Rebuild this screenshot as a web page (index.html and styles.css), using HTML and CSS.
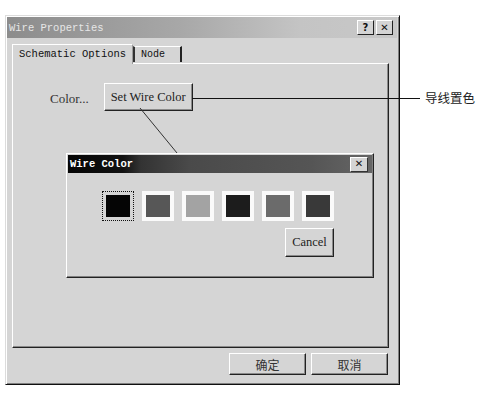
FILE: index.html
```html
<!DOCTYPE html>
<html lang="en">
<head>
  <meta charset="UTF-8">
  <title>Wire Properties</title>
  <link rel="stylesheet" href="styles.css">
</head>
<body>
  <div class="page">
    <div class="window">
      <div class="titlebar">
        <span class="title">Wire Properties</span>
        <span class="title-btn">?</span>
        <span class="title-btn">&#x2715;</span>
      </div>

      <div class="content">
        <div class="tabs">
          <div class="tab active">Schematic Options</div>
          <div class="tab">Node</div>
        </div>

        <div class="panel">
          <div class="color-row">
            <span class="label">Color...</span>
            <button class="btn set-color">Set Wire Color</button>
          </div>

          <div class="dialog">
            <div class="dialog-title">
              <span class="title">Wire Color</span>
              <span class="title-btn">&#x2715;</span>
            </div>
            <div class="dialog-body">
              <div class="swatches">
                <span class="swatch focus" style="background:#050505"></span>
                <span class="swatch" style="background:#575757"></span>
                <span class="swatch" style="background:#a3a3a3"></span>
                <span class="swatch" style="background:#1c1c1c"></span>
                <span class="swatch" style="background:#6b6b6b"></span>
                <span class="swatch" style="background:#393939"></span>
              </div>
              <button class="btn cancel">Cancel</button>
            </div>
          </div>
        </div>

        <div class="footer">
          <button class="btn cjk">确定</button>
          <button class="btn cjk">取消</button>
        </div>
      </div>
    </div>

    <!-- callout lines -->
    <svg class="leaders" width="481" height="397">
      <line x1="192" y1="98.5" x2="420" y2="98.5" stroke="#111" stroke-width="1.2"/>
      <line x1="140" y1="108" x2="177" y2="153" stroke="#333" stroke-width="1"/>
    </svg>
    <span class="callout">导线置色</span>
  </div>
</body>
</html>
```

FILE: styles.css
```css
body {
  margin: 0;
  background: #fff;
  font-family: "Liberation Serif", serif;
  color: #222;
}

.page {
  position: relative;
  width: 481px;
  height: 397px;
  padding: 15px 0 0 5px;
  box-sizing: border-box;
}

.window {
  width: 395px;
  height: 370px;
  box-sizing: border-box;
  background: #d5d5d5;
  border: 1px solid;
  border-color: #dcdcdc #101010 #101010 #dcdcdc;
  box-shadow: inset 1px 1px 0 #fff, inset -1px -1px 0 #808080;
  padding: 1px 2px 2px 1px;
  display: flex;
  flex-direction: column;
}

.titlebar {
  height: 21px;
  display: flex;
  align-items: center;
  gap: 2px;
  padding: 0 4px 0 2px;
  background: linear-gradient(to right, #8c8c8c, #a8a8a8 45%, #c4c4c4 75%, #c8c8c8);
}

.title {
  flex: 1;
  font-family: "Liberation Mono", monospace;
  font-size: 10.5px;
  color: #e6e6e6;
}

.title-btn {
  width: 15px;
  height: 13px;
  background: #d4d4d4;
  border: 1px solid;
  border-color: #fff #222 #222 #fff;
  font-family: "DejaVu Sans", sans-serif;
  font-size: 10px;
  font-weight: bold;
  color: #111;
  display: flex;
  align-items: center;
  justify-content: center;
  line-height: 1;
}

.content {
  flex: 1;
  display: flex;
  flex-direction: column;
  padding: 6px 8px 0 5px;
}

.tabs {
  display: flex;
  align-items: flex-end;
  height: 19px;
}

.tab {
  height: 16px;
  box-sizing: border-box;
  padding: 2px 6px 0 6px;
  border: 1px solid;
  border-bottom: none;
  border-color: #fff #222 transparent #fff;
  font-family: "Liberation Mono", monospace;
  font-size: 10px;
  color: #111;
  margin-bottom: 1px;
}

.tab.active {
  height: 20px;
  width: 121px;
  padding: 3px 0 0 6px;
  font-size: 10.5px;
  margin-bottom: -1px;
  background: #d5d5d5;
  position: relative;
  z-index: 1;
  border-right-color: #9a9a9a;
}

.tab:not(.active) {
  width: 49px;
  border-left-width: 2px;
  border-left-color: #333;
  border-right-width: 2px;
}

.panel {
  height: 285px;
  box-sizing: border-box;
  border: 1px solid;
  border-color: #fff #222 #222 #fff;
  box-shadow: inset -1px -1px 0 #8a8a8a;
  padding-top: 19px;
}

.color-row {
  display: flex;
  align-items: center;
  margin-left: 37px;
  gap: 15px;
}

.label {
  font-size: 13px;
  color: #333;
  margin-top: 4px;
}

.btn {
  font-family: "Liberation Serif", serif;
  background: #d5d5d5;
  border: 1px solid;
  border-color: #fff #222 #222 #fff;
  box-shadow: inset -1px -1px 0 #8a8a8a;
  color: #222;
  padding: 0;
  cursor: pointer;
}

.set-color {
  width: 89px;
  height: 28px;
  font-size: 12.5px;
}

.dialog {
  width: 308px;
  height: 125px;
  box-sizing: border-box;
  margin: 42px 0 0 53px;
  background: #d5d5d5;
  border: 1px solid;
  border-color: #fff #222 #222 #fff;
  box-shadow: inset -1px -1px 0 #808080;
  padding: 1px;
}

.dialog-title {
  height: 18px;
  display: flex;
  align-items: center;
  padding: 0 4px 0 2px;
  background: linear-gradient(to right, #050505, #111 18%, #333 24%, #4a4a4a 40%, #555 80%, #666);
}

.dialog-title .title {
  color: #fff;
  font-weight: bold;
}

.dialog-title .title-btn {
  width: 16px;
  height: 13px;
  border-color: #fff #333 #333 #fff;
}

.dialog-body {
  display: inline-flex;
  flex-direction: column;
  align-items: flex-end;
  gap: 7px;
  margin: 18px 0 0 34px;
}

.swatches {
  display: flex;
  gap: 8px;
}

.swatch {
  width: 32px;
  height: 30px;
  box-sizing: border-box;
  border: 4px solid #fafafa;
}

.swatch.focus {
  border: 4px solid #d5d5d5;
  outline: 1px dotted #111;
  outline-offset: -1px;
}

.cancel {
  width: 49px;
  height: 29px;
  font-size: 12.5px;
}

.footer {
  display: flex;
  justify-content: flex-end;
  gap: 5px;
  margin-top: 5px;
  padding-right: 1px;
}

.cjk {
  width: 77px;
  height: 22px;
  font-family: "Noto Sans CJK SC", sans-serif;
  font-size: 12px;
  color: #333;
}

.leaders {
  position: absolute;
  left: 0;
  top: 0;
  pointer-events: none;
}

.callout {
  position: absolute;
  left: 425px;
  top: 89px;
  font-family: "Noto Sans CJK SC", sans-serif;
  font-size: 12.5px;
  line-height: 18px;
  color: #222;
}
```
